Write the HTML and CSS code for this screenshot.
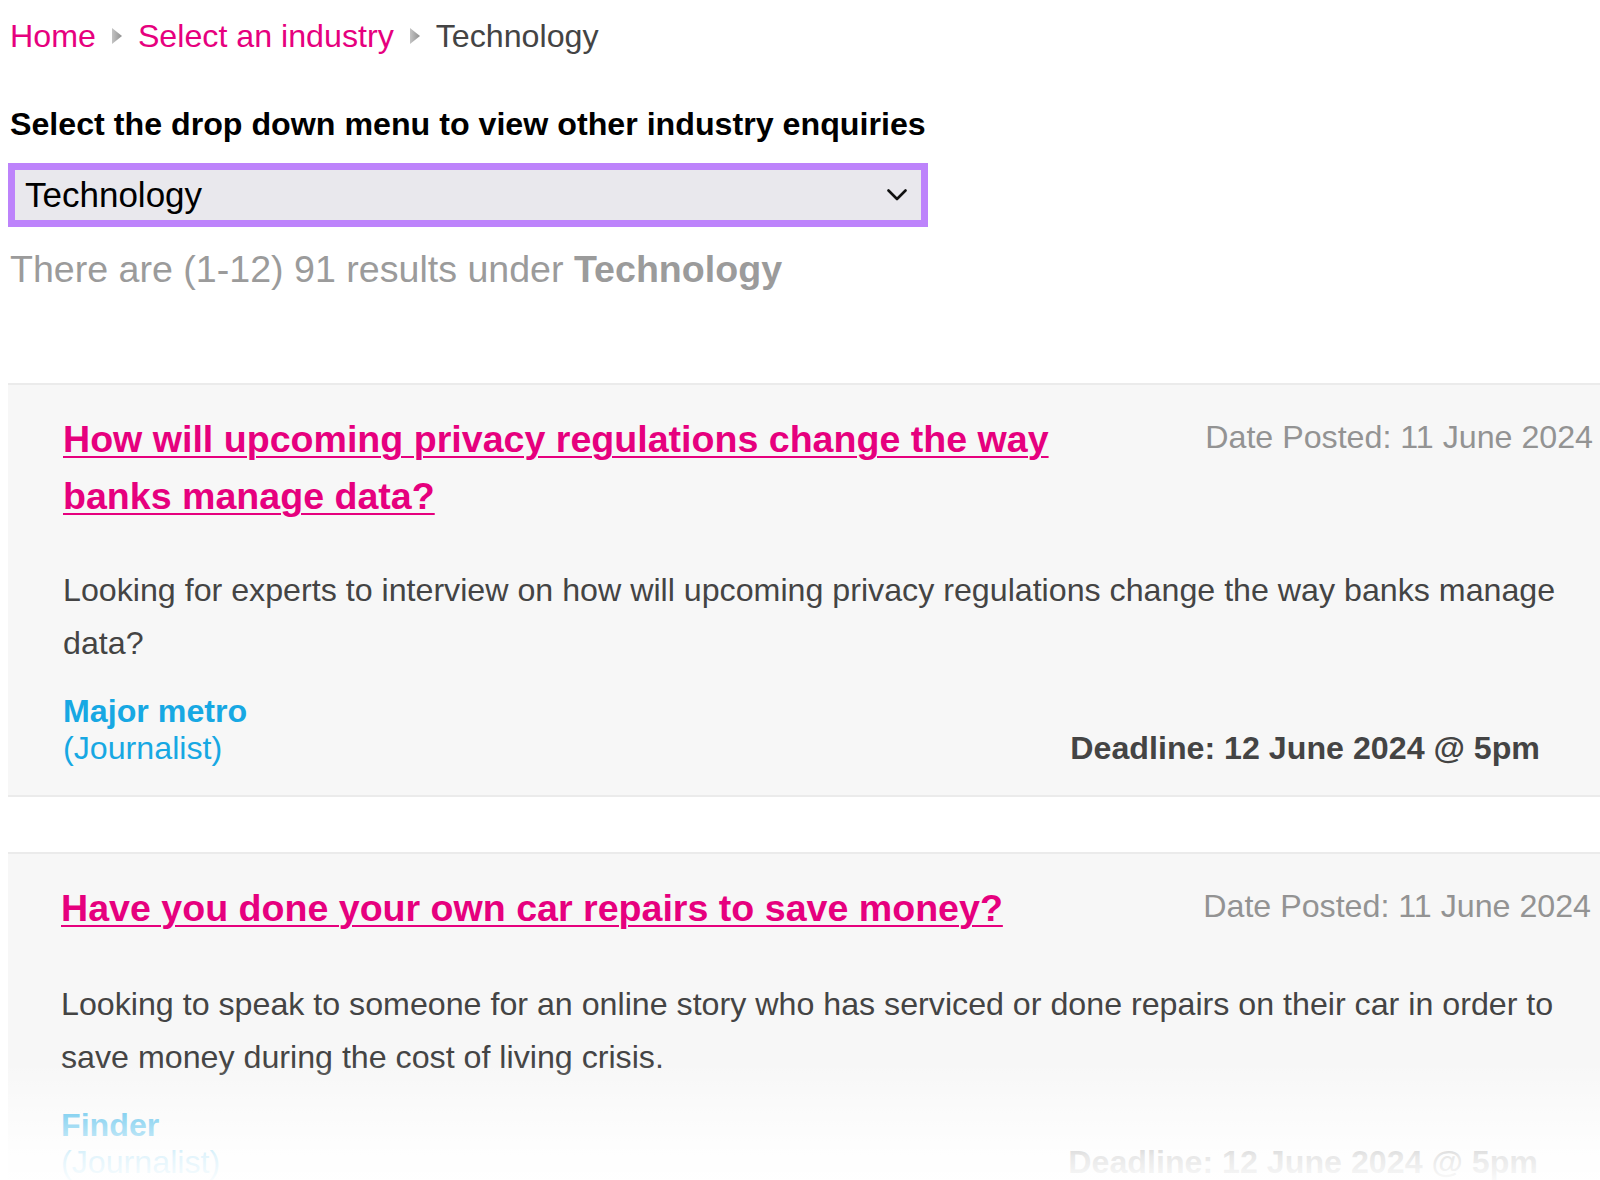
FILE: index.html
```html
<!DOCTYPE html>
<html lang="en">
<head>
<meta charset="utf-8">
<title>Technology enquiries</title>
<link rel="stylesheet" href="styles.css">
</head>
<body>
<div class="page">
  <div class="top">
    <nav class="breadcrumb">
      <a href="#" class="crumb-link">Home</a>
      <svg class="crumb-sep" width="10" height="16" viewBox="0 0 10 16"><defs><linearGradient id="g1" x1="0" y1="0" x2="1" y2="0"><stop offset="0" stop-color="#c4c4c4"/><stop offset="1" stop-color="#8f8f8f"/></linearGradient></defs><polygon points="0,0 10,8 0,16" fill="url(#g1)"/></svg>
      <a href="#" class="crumb-link">Select an industry</a>
      <svg class="crumb-sep" width="10" height="16" viewBox="0 0 10 16"><polygon points="0,0 10,8 0,16" fill="url(#g1)"/></svg>
      <span class="crumb-current">Technology</span>
    </nav>

    <h2 class="select-label">Select the drop down menu to view other industry enquiries</h2>
  </div>

  <div class="select-box" role="combobox" aria-expanded="false">
    <span class="select-value">Technology</span>
    <svg class="select-chevron" width="20" height="12" viewBox="0 0 20 12"><polyline points="1.5,1.5 10,10 18.5,1.5" fill="none" stroke="#111" stroke-width="2.6" stroke-linecap="round" stroke-linejoin="round"/></svg>
  </div>

  <p class="results">There are (1-12) 91 results under <strong>Technology</strong></p>

  <div class="cards">
    <article class="card">
      <div class="card-head">
        <a href="#" class="card-title">How will upcoming privacy regulations change the way banks manage data?</a>
        <span class="card-date">Date Posted: 11 June 2024</span>
      </div>
      <p class="card-desc">Looking for experts to interview on how will upcoming privacy regulations change the way banks manage data?</p>
      <div class="card-foot">
        <div class="author">
          <div class="author-name">Major metro</div>
          <div class="author-role">(Journalist)</div>
        </div>
        <div class="deadline">Deadline: 12 June 2024 @ 5pm</div>
      </div>
    </article>

    <article class="card card-second">
      <div class="card-head">
        <a href="#" class="card-title">Have you done your own car repairs to save money?</a>
        <span class="card-date">Date Posted: 11 June 2024</span>
      </div>
      <p class="card-desc">Looking to speak to someone for an online story who has serviced or done repairs on their car in order to save money during the cost of living crisis.</p>
      <div class="card-foot">
        <div class="author">
          <div class="author-name">Finder</div>
          <div class="author-role">(Journalist)</div>
        </div>
        <div class="deadline">Deadline: 12 June 2024 @ 5pm</div>
      </div>
    </article>
  </div>
</div>
<div class="fade"></div>
</body>
</html>
```

FILE: styles.css
```css
html, body {
  margin: 0;
  padding: 0;
  overflow: hidden;
  background: #ffffff;
}

body {
  font-family: "Liberation Sans", Arial, sans-serif;
  color: #444444;
  height: 1180px;
  position: relative;
}

.page {
  padding: 8px 0 0 8px;
}

.top {
  padding-left: 2px;
}

/* Breadcrumb */
.breadcrumb {
  display: flex;
  align-items: center;
  height: 56px;
  font-size: 32.2px;
  line-height: 56px;
}

.crumb-link {
  color: #e6007e;
  text-decoration: none;
}

.crumb-sep {
  margin: 0 16px;
  flex: none;
}

.crumb-current {
  color: #444444;
}

/* Dropdown */
.select-label {
  margin: 40px 0 0 0;
  font-size: 32.2px;
  line-height: 41px;
  font-weight: bold;
  color: #000000;
}

.select-box {
  margin-top: 18px;
  width: 920px;
  height: 64px;
  box-sizing: border-box;
  border: 7px solid #bd83fb;
  background: #e9e8ed;
  display: flex;
  align-items: center;
  justify-content: space-between;
  padding: 0 14px 0 10px;
}

.select-value {
  font-size: 35px;
  color: #000000;
  line-height: 50px;
}

.select-chevron {
  flex: none;
}

.results {
  margin: 20px 0 0 2px;
  font-size: 37.6px;
  line-height: 44px;
  color: #9b9b9b;
}

.results strong {
  color: #9b9b9b;
}

/* Cards */
.cards {
  margin-top: 92px;
  display: flex;
  flex-direction: column;
  gap: 55px;
}

.card {
  background: #f7f7f7;
  border-top: 2px solid #ebebeb;
  border-bottom: 2px solid #ebebeb;
  padding: 26px 7px 28px 55px;
}

.card-second {
  padding-left: 53px;
  padding-right: 9px;
}

.card-head {
  display: flex;
  justify-content: space-between;
  align-items: flex-start;
}

.card-title {
  max-width: 1050px;
  font-size: 37.6px;
  line-height: 57px;
  font-weight: bold;
  color: #e6007e;
  text-decoration: underline;
  text-decoration-thickness: 2px;
  text-underline-offset: 4px;
}

.card-date {
  font-size: 32.2px;
  line-height: 53px;
  color: #939393;
  white-space: nowrap;
}

.card-desc {
  margin: 39px 0 0 0;
  max-width: 1530px;
  font-size: 32.2px;
  line-height: 53px;
  color: #444444;
}

.card-second .card-desc {
  margin-top: 41px;
}

.card-foot {
  margin-top: 23px;
  display: flex;
  justify-content: space-between;
  align-items: flex-end;
}

.author-name {
  font-size: 32.2px;
  line-height: 37px;
  font-weight: bold;
  color: #17a8e3;
}

.author-role {
  font-size: 32.2px;
  line-height: 37px;
  color: #17a8e3;
}

.deadline {
  font-size: 32.2px;
  line-height: 37px;
  font-weight: bold;
  color: #444444;
  margin-right: 53px;
}

/* bottom fade overlay */
.fade {
  position: absolute;
  left: 0;
  right: 0;
  top: 1062px;
  height: 118px;
  background: linear-gradient(to bottom, rgba(255,255,255,0) 0%, rgba(255,255,255,0.4) 35%, rgba(255,255,255,0.88) 80%, rgba(255,255,255,0.97) 100%);
  pointer-events: none;
}
```
